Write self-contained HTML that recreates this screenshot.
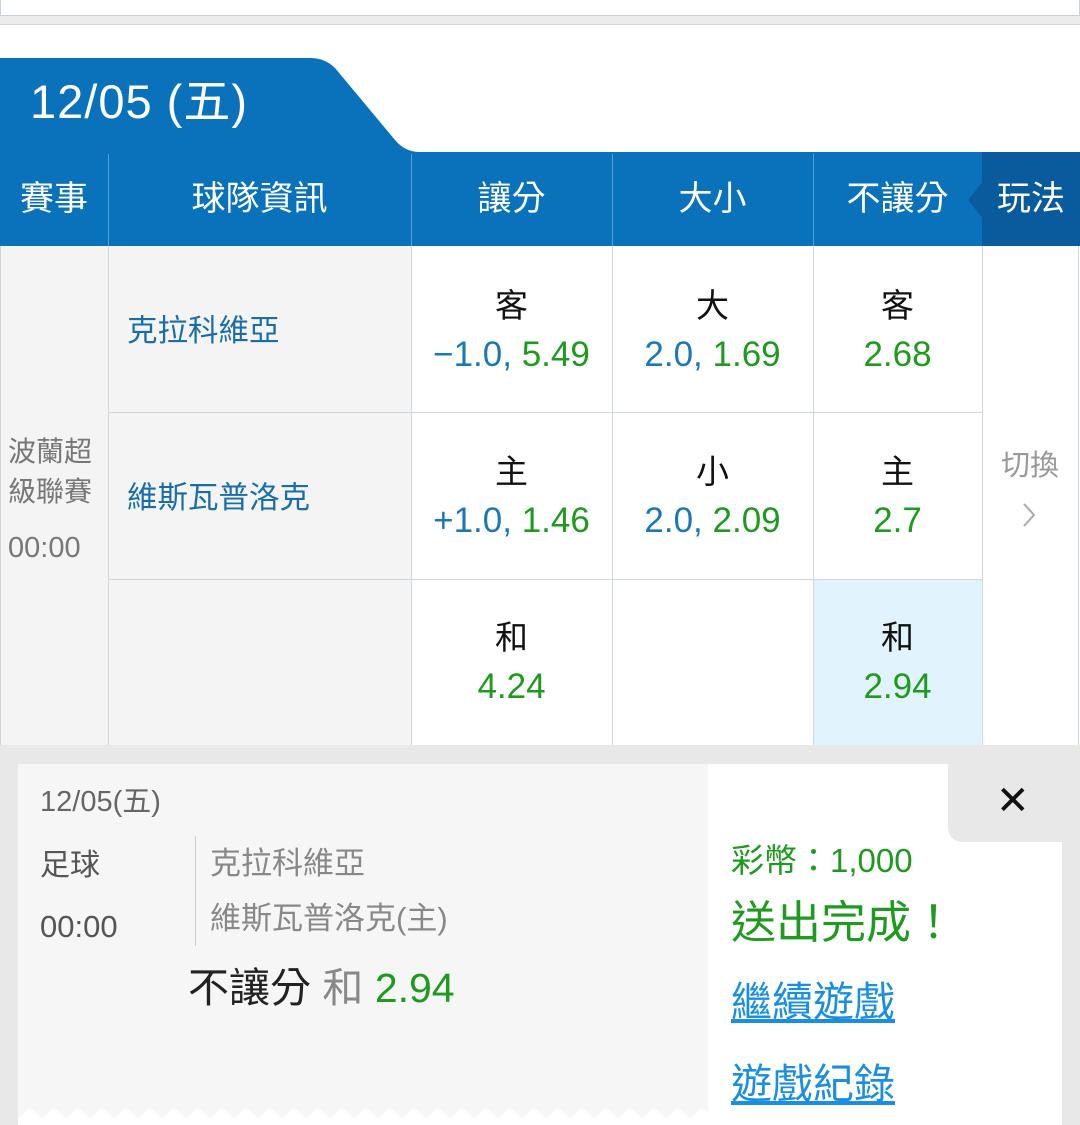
<!DOCTYPE html>
<html><head><meta charset="utf-8"><style>
*{margin:0;padding:0;box-sizing:border-box}
body{width:1080px;height:1125px;overflow:hidden;background:#fff;position:relative;font-family:"Liberation Sans","Noto Sans CJK TC",sans-serif}
.a{position:absolute}
.c{position:absolute;text-align:center}
.hd{color:#fff;font-size:34px;top:152px;height:94px;line-height:94px}
.vl{position:absolute;width:1px;background:#cfd8e0}
.hl{position:absolute;height:1px;background:#cfd8e0}
.lab{font-size:33px;color:#111;line-height:40px}
.blu{color:#1a78b8}.grn{color:#1e9a1e}
.od{font-size:35px;line-height:42px;margin-top:8px}
</style></head><body>
<div class="a" style="left:0;top:0;width:1080px;height:16px;background:#fff;border:1px solid #c9d1d9;border-top:none"></div>
<div class="a" style="left:0;top:16px;width:1080px;height:9px;background:#ececec;border-bottom:1px solid #d5d5d5"></div>
<svg class="a" style="left:0;top:58px" width="1080" height="96"><path d="M0 0 H310 Q325 0 335 10 L395 82 Q405 94 420 94 H1080 V96 H0Z" fill="#0a72bb"/></svg>
<div class="a" style="left:30px;top:72px;color:#fff;font-size:47px;line-height:60px;letter-spacing:1px">12/05 (五)</div>
<div class="a" style="left:0;top:152px;width:1080px;height:94px;background:#0a72bb"></div>
<div class="a" style="left:982px;top:152px;width:98px;height:94px;background:#0a5a9e"></div>
<svg class="a" style="left:966px;top:180px" width="18" height="40"><path d="M18 0 L2 20 L18 40Z" fill="#0a5a9e"/></svg>
<div class="vl" style="left:108px;top:154px;height:92px;background:#5a9fd3"></div>
<div class="vl" style="left:411px;top:154px;height:92px;background:#5a9fd3"></div>
<div class="vl" style="left:612px;top:154px;height:92px;background:#5a9fd3"></div>
<div class="vl" style="left:813px;top:154px;height:92px;background:#5a9fd3"></div>
<div class="c hd" style="left:0;width:108px">賽事</div>
<div class="c hd" style="left:108px;width:303px">球隊資訊</div>
<div class="c hd" style="left:411px;width:201px">讓分</div>
<div class="c hd" style="left:612px;width:201px">大小</div>
<div class="c hd" style="left:813px;width:169px">不讓分</div>
<div class="c hd" style="left:982px;width:98px">玩法</div>
<div class="a" style="left:0;top:246px;width:411px;height:499px;background:#f4f4f4"></div>
<div class="a" style="left:813px;top:579px;width:169px;height:166px;background:#e1f3fc"></div>
<div class="vl" style="left:0;top:246px;height:499px"></div>
<div class="vl" style="left:108px;top:246px;height:499px"></div>
<div class="vl" style="left:411px;top:246px;height:499px"></div>
<div class="vl" style="left:612px;top:246px;height:499px"></div>
<div class="vl" style="left:813px;top:246px;height:499px"></div>
<div class="vl" style="left:982px;top:246px;height:499px"></div>
<div class="vl" style="left:1078px;top:246px;height:499px"></div>
<div class="hl" style="left:108px;top:412px;width:874px"></div>
<div class="hl" style="left:108px;top:579px;width:874px"></div>
<div class="a" style="left:8px;top:432px;font-size:28px;line-height:40px;color:#777">波蘭超<br>級聯賽</div>
<div class="a" style="left:8px;top:530px;font-size:29px;line-height:36px;color:#777">00:00</div>
<div class="a" style="left:127px;top:311px;font-size:30.5px;line-height:40px;color:#1a6ea8">克拉科維亞</div>
<div class="a" style="left:127px;top:478px;font-size:30.5px;line-height:40px;color:#1a6ea8">維斯瓦普洛克</div>
<div class="c" style="left:411px;width:201px;top:286px"><div class="lab">客</div><div class="od"><span class="blu">−1.0,</span> <span class="grn">5.49</span></div></div>
<div class="c" style="left:612px;width:201px;top:286px"><div class="lab">大</div><div class="od"><span class="blu">2.0,</span> <span class="grn">1.69</span></div></div>
<div class="c" style="left:813px;width:169px;top:286px"><div class="lab">客</div><div class="od grn">2.68</div></div>
<div class="c" style="left:411px;width:201px;top:452px"><div class="lab">主</div><div class="od"><span class="blu">+1.0,</span> <span class="grn">1.46</span></div></div>
<div class="c" style="left:612px;width:201px;top:452px"><div class="lab">小</div><div class="od"><span class="blu">2.0,</span> <span class="grn">2.09</span></div></div>
<div class="c" style="left:813px;width:169px;top:452px"><div class="lab">主</div><div class="od grn">2.7</div></div>
<div class="c" style="left:411px;width:201px;top:618px"><div class="lab">和</div><div class="od grn">4.24</div></div>
<div class="c" style="left:813px;width:169px;top:618px"><div class="lab">和</div><div class="od grn">2.94</div></div>
<div class="c" style="left:982px;width:96px;top:446px;font-size:29px;color:#999;line-height:40px">切換</div>
<svg class="a" style="left:1022px;top:502px" width="14" height="26"><path d="M2 2 L12 13 L2 24" stroke="#aaa" stroke-width="2" fill="none"/></svg>
<div class="a" style="left:0;top:745px;width:1080px;height:380px;background:#e8e8e8"></div>
<div class="a" style="left:18px;top:764px;width:690px;height:361px;background:#f6f6f6"></div>
<svg class="a" style="left:18px;top:1100px" width="690" height="25"><path d="M0 25 L0 18 L12 8 L24 18 L36 8 L48 18 L60 8 L72 18 L84 8 L96 18 L108 8 L120 18 L132 8 L144 18 L156 8 L168 18 L180 8 L192 18 L204 8 L216 18 L228 8 L240 18 L252 8 L264 18 L276 8 L288 18 L300 8 L312 18 L324 8 L336 18 L348 8 L360 18 L372 8 L384 18 L396 8 L408 18 L420 8 L432 18 L444 8 L456 18 L468 8 L480 18 L492 8 L504 18 L516 8 L528 18 L540 8 L552 18 L564 8 L576 18 L588 8 L600 18 L612 8 L624 18 L636 8 L648 18 L660 8 L672 18 L684 8 L690 13 V25Z" fill="#fff"/></svg>
<div class="a" style="left:708px;top:764px;width:354px;height:361px;background:#fff"></div>
<div class="a" style="left:948px;top:764px;width:114px;height:78px;background:#e8e8e8;border-bottom-left-radius:14px"></div>
<div class="a" style="left:996px;top:776px;font-size:40px;line-height:50px;color:#111">✕</div>
<div class="a" style="left:40px;top:784px;font-size:29px;color:#666;line-height:36px">12/05(五)</div>
<div class="a" style="left:40px;top:846px;font-size:30px;color:#555;line-height:40px">足球</div>
<div class="a" style="left:40px;top:907px;font-size:31px;color:#555;line-height:40px">00:00</div>
<div class="vl" style="left:195px;top:836px;height:110px;background:#ccc"></div>
<div class="a" style="left:210px;top:844px;font-size:31px;color:#888;line-height:40px">克拉科維亞</div>
<div class="a" style="left:210px;top:899px;font-size:31px;color:#888;line-height:40px">維斯瓦普洛克(主)</div>
<div class="a" style="left:188px;top:962px;font-size:41px;line-height:52px"><span style="color:#222">不讓分</span> <span style="color:#888">和</span> <span class="grn">2.94</span></div>
<div class="a" style="left:731px;top:840px;font-size:33px;color:#1e9a1e;line-height:42px">彩幣：1,000</div>
<div class="a" style="left:731px;top:894px;font-size:45px;color:#1e9a1e;line-height:58px">送出完成！</div>
<div class="a" style="left:731px;top:976px;font-size:41px;color:#1a8ee0;line-height:52px;text-decoration:underline">繼續遊戲</div>
<div class="a" style="left:731px;top:1058px;font-size:41px;color:#1a8ee0;line-height:52px;text-decoration:underline">遊戲紀錄</div>
</body></html>
